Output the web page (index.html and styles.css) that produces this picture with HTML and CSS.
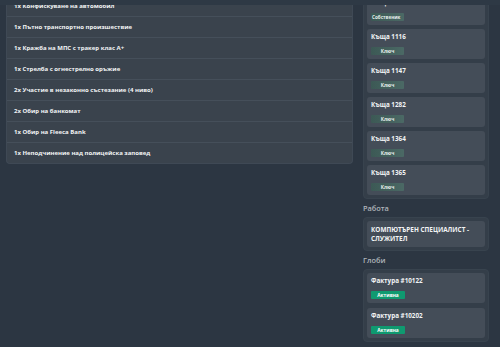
FILE: index.html
```html
<!DOCTYPE html>
<html lang="bg">
<head>
<meta charset="utf-8">
<link rel="stylesheet" href="styles.css">
</head>
<body>
<div class="topbar"></div>
<div class="page">
  <div class="left">
    <div class="panel">
      <div class="row">1x Конфискуване на автомобил</div>
      <div class="row">1x Пътно транспортно произшествие</div>
      <div class="row">1x Кражба на МПС с тракер клас А+</div>
      <div class="row">1x Стрелба с огнестрелно оръжие</div>
      <div class="row">2x Участие в незаконно състезание (4 ниво)</div>
      <div class="row">2x Обир на банкомат</div>
      <div class="row">1x Обир на Fleeca Bank</div>
      <div class="row">1x Неподчинение над полицейска заповед</div>
    </div>
  </div>
  <div class="right">
    <div class="box">
      <div class="card">
        <div class="title">Къща 1050</div>
        <div class="badge key left-text">Собственик</div>
      </div>
      <div class="card">
        <div class="title">Къща 1116</div>
        <div class="badge key">Ключ</div>
      </div>
      <div class="card">
        <div class="title">Къща 1147</div>
        <div class="badge key">Ключ</div>
      </div>
      <div class="card">
        <div class="title">Къща 1282</div>
        <div class="badge key">Ключ</div>
      </div>
      <div class="card">
        <div class="title">Къща 1364</div>
        <div class="badge key">Ключ</div>
      </div>
      <div class="card">
        <div class="title">Къща 1365</div>
        <div class="badge key">Ключ</div>
      </div>
    </div>
    <div class="label">Работа</div>
    <div class="box">
      <div class="card job">КОМПЮТЪРЕН СПЕЦИАЛИСТ - СЛУЖИТЕЛ</div>
    </div>
    <div class="label">Глоби</div>
    <div class="box fines">
      <div class="card">
        <div class="title">Фактура #10122</div>
        <div class="badge active">Активна</div>
      </div>
      <div class="card">
        <div class="title">Фактура #10202</div>
        <div class="badge active">Активна</div>
      </div>
    </div>
  </div>
</div>
</body>
</html>
```

FILE: styles.css
```css
html, body {
  margin: 0;
  padding: 0;
  background: #2c3642;
  font-family: "Open Sans", "Liberation Sans", sans-serif;
  color: #f2f4f5;
  overflow: hidden;
}

.topbar {
  position: fixed;
  top: 0;
  left: 0;
  right: 0;
  height: 5px;
  background: #2e3945;
  z-index: 5;
}

.page {
  display: flex;
  gap: 10px;
  padding: 0 11px 0 6px;
  margin-top: -9px;
  align-items: flex-start;
}

.left {
  width: 347px;
  margin-top: 5px;
}

.panel {
  background: #3a434d;
  border: 1px solid #3f4955;
  border-top: none;
  border-radius: 0 0 4px 4px;
}

.row {
  height: 20px;
  line-height: 20px;
  padding-left: 7px;
  font-size: 6px;
  font-weight: 700;
  border-bottom: 1px solid #454f5a;
  white-space: nowrap;
}

.row:last-child {
  border-bottom: none;
}

.right {
  width: 126px;
  display: flex;
  flex-direction: column;
}

.box {
  background: #343e49;
  border: 1px solid #38434e;
  border-radius: 4px;
  padding: 3px;
  display: flex;
  flex-direction: column;
  gap: 4px;
}

.box.fines {
  gap: 5px;
}

.card {
  background: #444d58;
  border-radius: 3px;
  padding: 3px 4px 4px;
  height: 30px;
  box-sizing: border-box;
}

.title {
  font-size: 6.3px;
  font-weight: 700;
  line-height: 10px;
  white-space: nowrap;
}

.badge {
  margin-top: 5px;
  width: 33px;
  height: 8px;
  line-height: 8px;
  font-size: 4.8px;
  font-weight: 700;
  text-align: center;
  border-radius: 1px;
  white-space: nowrap;
}

.badge.key {
  background: linear-gradient(90deg, #3c5955, #4b6965);
  color: #e6efec;
}

.badge.left-text {
  text-align: left;
  padding-left: 1px;
  box-sizing: border-box;
  font-size: 4.6px;
}

.badge.active {
  width: 34px;
  background: #0f9a70;
  color: #ffffff;
}

.job {
  height: auto;
  padding: 4px;
  font-size: 6.4px;
  font-weight: 700;
  line-height: 9px;
}

.label {
  font-size: 7.4px;
  font-weight: 600;
  color: #aeb4ba;
  line-height: 12px;
  margin: 3px 0 3px;
}
```
